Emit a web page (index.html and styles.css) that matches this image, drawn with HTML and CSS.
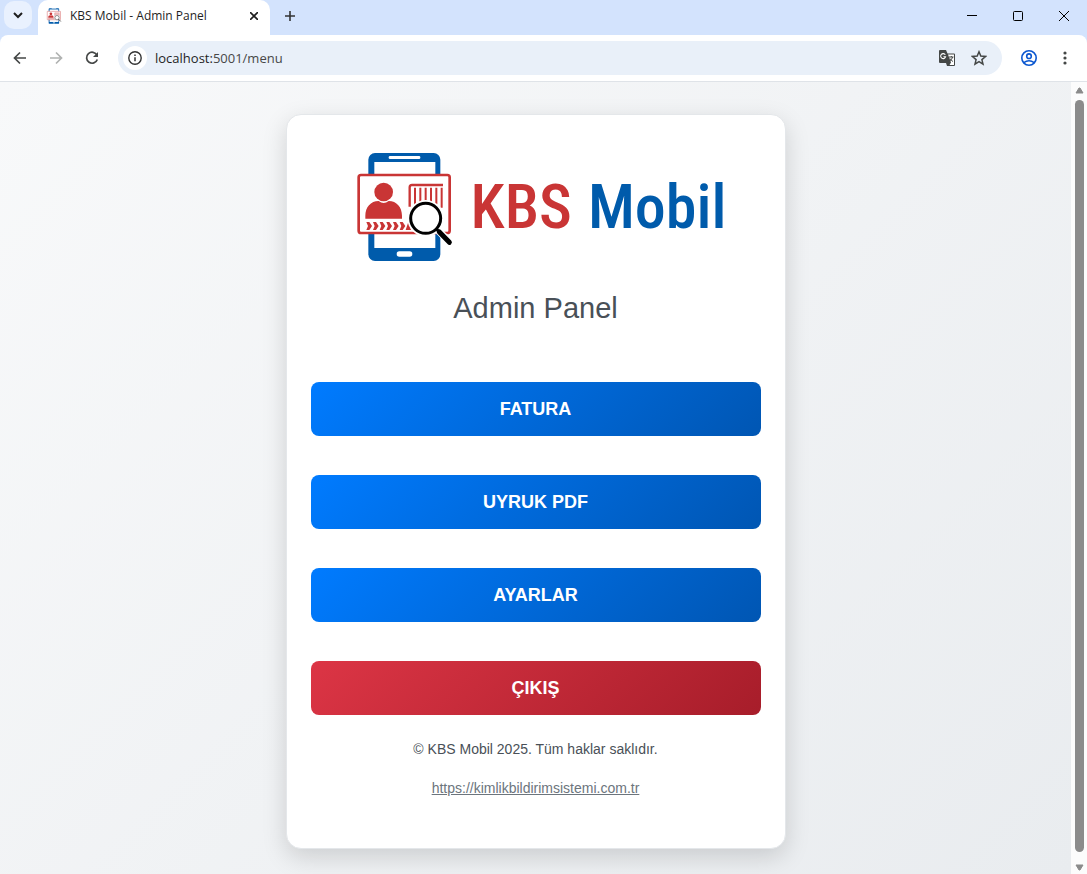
FILE: index.html
```
<!DOCTYPE html>
<html lang="tr">
<head>
    <meta charset="UTF-8">
    <meta name="viewport" content="width=device-width, initial-scale=1.0">
    <title>KBS Mobil - Admin Panel</title>
    <link rel="stylesheet" href="styles.css">
</head>
<body>
    <!-- Logo symbol, used in the tab and in the card -->
    <svg class="defs" width="0" height="0" aria-hidden="true">
        <symbol id="kbs-logo" viewBox="50 36 288 330">
            <rect x="84" y="39" width="216" height="324" rx="20" fill="#005bab"/>
            <rect x="102" y="66" width="183" height="258" fill="#fff"/>
            <rect x="145" y="48" width="95" height="9" rx="4" fill="#fff"/>
            <rect x="169" y="334" width="47" height="16" rx="8" fill="#fff"/>
            <rect x="55" y="105" width="273" height="174" rx="7" fill="#fff" stroke="#c93535" stroke-width="8"/>
            <circle cx="130" cy="156" r="28" fill="#c93535"/>
            <path d="M75 236v-9c0-25 16-44 40-44q15 12 30 0c24 0 40 19 40 44v9z" fill="#c93535"/>
            <path d="M78 246h9l8 12-8 12h-9l5-12zM98 246h9l8 12-8 12h-9l5-12zM118 246h9l8 12-8 12h-9l5-12zM138 246h9l8 12-8 12h-9l5-12zM158 246h9l8 12-8 12h-9l5-12zM178 246h9l8 12-8 12h-9l5-12zM196 270l8-24 8 24z" fill="#c93535"/>
            <path d="M208 200v-58q0-7 7-7h93" fill="none" stroke="#c93535" stroke-width="7"/>
            <path d="M224 143v60M240 143v50M256 143v50M272 143v50M288 143v50M304 143v60" fill="none" stroke="#c93535" stroke-width="6"/>
            <circle cx="256" cy="235" r="55" fill="#fff"/>
            <path d="M286 264l44 44" stroke="#fff" stroke-width="22"/>
            <circle cx="256" cy="235" r="45" fill="#fff" stroke="#000" stroke-width="9"/>
            <path d="M288 267l10 10" stroke="#000" stroke-width="9"/>
            <path d="M297 276l30 31" stroke="#000" stroke-width="15" stroke-linecap="round"/>
        </symbol>
    </svg>

    <header class="browser">
        <div class="tab-strip">
            <button class="tab-search" aria-label="Search tabs">
                <svg width="10" height="10" viewBox="0 0 10 10"><path d="M1 3l4 4 4-4" fill="none" stroke="#1f1f1f" stroke-width="2"/></svg>
            </button>
            <div class="tab">
                <svg class="favicon" width="16" height="16"><use href="#kbs-logo"/></svg>
                <span class="tab-title">KBS Mobil - Admin Panel</span>
                <button class="icon-btn" aria-label="Close tab">
                    <svg width="8" height="8" viewBox="0 0 8 8"><path d="M0 0l8 8M8 0l-8 8" stroke="#1f1f1f" stroke-width="1.600"/></svg>
                </button>
            </div>
            <button class="icon-btn new-tab" aria-label="New tab">
                <svg width="12" height="12" viewBox="0 0 12 12"><path d="M6 1v10M1 6h10" stroke="#333" stroke-width="1.600"/></svg>
            </button>
            <div class="window-buttons">
                <button aria-label="Minimize"><svg width="12" height="12" viewBox="0 0 12 12"><path d="M1 5.500h10" stroke="#000"/></svg></button>
                <button aria-label="Maximize"><svg width="12" height="12" viewBox="0 0 12 12"><rect x="1.500" y="1.500" width="9" height="9" rx="1" fill="none" stroke="#000"/></svg></button>
                <button aria-label="Close"><svg width="12" height="12" viewBox="0 0 12 12"><path d="M1 1l10 10M11 1L1 11" stroke="#000"/></svg></button>
            </div>
        </div>
        <div class="toolbar">
            <button class="icon-btn nav-btn" aria-label="Back">
                <svg width="16" height="16" viewBox="0 0 16 16"><path d="M14 8H3M8 2.500L2.500 8 8 13.500" fill="none" stroke="#444746" stroke-width="1.700"/></svg>
            </button>
            <button class="icon-btn nav-btn" aria-label="Forward" disabled>
                <svg width="16" height="16" viewBox="0 0 16 16"><path d="M2 8h11M8 2.500l5.500 5.500L8 13.500" fill="none" stroke="#b0b2b1" stroke-width="1.700"/></svg>
            </button>
            <button class="icon-btn nav-btn" aria-label="Reload">
                <svg width="16" height="16" viewBox="0 0 16 16"><path d="M13 5.200A5.500 5.500 0 1 0 13.300 9.500" fill="none" stroke="#444746" stroke-width="1.700"/><path d="M14 2v5H9z" fill="#444746"/></svg>
            </button>
            <div class="address-bar">
                <button class="site-info" aria-label="Site information">
                    <svg width="16" height="16" viewBox="0 0 16 16"><circle cx="8" cy="8" r="6.200" fill="none" stroke="#333" stroke-width="1.400"/><path d="M8 7.200v4M8 4.500v1.600" stroke="#333" stroke-width="1.500"/></svg>
                </button>
                <div class="url"><span class="host">localhost:</span>5001/menu</div>
                <button class="icon-btn translate" aria-label="Translate this page">
                    <svg width="18" height="18" viewBox="0 0 18 18">
                        <path d="M2 1h6l1.500 3.500H16a1 1 0 0 1 1 1V16a1 1 0 0 1-1 1H9l-1-3H2a1 1 0 0 1-1-1V2a1 1 0 0 1 1-1z" fill="#444746"/>
                        <path d="M10 5.500h6v10.500h-4.500l1.500-2.500z" fill="#fff"/>
                        <path d="M7.300 5.800A2.500 2.500 0 1 0 7.600 7.700H5.400" fill="none" stroke="#fff" stroke-width="1.100"/>
                        <path d="M11 8h4.500M13.300 7v1M14.600 8q-.6 2.700-3 4M12 9.500q1 2 3 3" fill="none" stroke="#444746"/>
                    </svg>
                </button>
                <button class="icon-btn star" aria-label="Bookmark this tab">
                    <svg width="16" height="16" viewBox="0 0 16 16"><path d="M8 1.800l1.800 4.300 4.700.4-3.600 3.100 1.100 4.600L8 11.700l-4 2.500 1.100-4.600-3.600-3.100 4.700-.4z" fill="none" stroke="#444746" stroke-width="1.500"/></svg>
                </button>
            </div>
            <button class="icon-btn profile" aria-label="Profile">
                <svg width="18" height="18" viewBox="0 0 18 18" fill="none" stroke="#0b57d0" stroke-width="1.600"><circle cx="9" cy="9" r="7.200"/><circle cx="9" cy="7.200" r="2.300"/><path d="M3.800 13.700q5.200-3.800 10.400 0"/></svg>
            </button>
            <button class="icon-btn menu" aria-label="Menu">
                <svg width="4" height="16" viewBox="0 0 4 16" fill="#444746"><circle cx="2" cy="3" r="1.600"/><circle cx="2" cy="8" r="1.600"/><circle cx="2" cy="13" r="1.600"/></svg>
            </button>
        </div>
    </header>

    <div class="viewport">
        <main class="page">
            <div class="card">
                <div class="logo">
                    <svg class="logo-icon" width="96" height="110"><use href="#kbs-logo"/></svg>
                    <span class="logo-kbs">KBS</span>
                    <span class="logo-mobil">Mobil</span>
                </div>
                <h1>Admin Panel</h1>
                <nav class="menu-list">
                    <button class="btn">FATURA</button>
                    <button class="btn">UYRUK PDF</button>
                    <button class="btn">AYARLAR</button>
                    <button class="btn btn-danger">ÇIKIŞ</button>
                </nav>
                <footer>
                    <p>© KBS Mobil 2025. Tüm haklar saklıdır.</p>
                    <p><a href="https://kimlikbildirimsistemi.com.tr">https://kimlikbildirimsistemi.com.tr</a></p>
                </footer>
            </div>
        </main>
        <div class="scrollbar" aria-hidden="true">
            <svg width="9" height="7" viewBox="0 0 9 7"><path d="M4 1h1l3 5H1z" fill="#8b8b8b" stroke="#8b8b8b" stroke-linejoin="round"/></svg>
            <div class="thumb"></div>
            <svg width="9" height="7" viewBox="0 0 9 7"><path d="M4 6h1l3-5H1z" fill="#8b8b8b" stroke="#8b8b8b" stroke-linejoin="round"/></svg>
        </div>
    </div>
</body>
</html>
```
FILE: styles.css
```
* {
    box-sizing: border-box;
}
body {
    margin: 0;
    min-height: 100vh;
    display: flex;
    flex-direction: column;
    font-family: "Liberation Sans", Arial, sans-serif;
}
button {
    border: none;
    padding: 0;
    background: none;
    font-family: inherit;
    cursor: pointer;
}
svg {
    display: block;
}
.defs {
    position: absolute;
}

/* Browser window */
.browser {
    background-color: #d3e3fd;
    font-family: "Open Sans", "Segoe UI", sans-serif;
    color: #1f1f1f;
}
.tab-strip {
    display: flex;
    height: 35px;
    padding-left: 4px;
}
.tab-search {
    display: flex;
    align-items: center;
    justify-content: center;
    width: 28px;
    height: 28px;
    margin-top: 1px;
    border-radius: 10px;
    background-color: #e9f1fe;
}
.tab {
    display: flex;
    align-items: center;
    width: 232px;
    margin-left: 6px;
    padding: 0 8px 4px;
    border-radius: 10px 10px 0 0;
    background-color: #fff;
}
.tab-title {
    flex: 1;
    margin-left: 8px;
    font-size: 12px;
    line-height: 16px;
    white-space: nowrap;
}
.icon-btn {
    display: flex;
    align-items: center;
    justify-content: center;
    width: 16px;
    flex-shrink: 0;
}
.new-tab {
    width: 40px;
    height: 31px;
}
.window-buttons {
    display: flex;
    height: 31px;
    margin-left: auto;
}
.window-buttons button {
    display: flex;
    align-items: center;
    justify-content: center;
    width: 46px;
}
.toolbar {
    display: flex;
    align-items: center;
    height: 47px;
    padding: 0 14px 0 2px;
    border-bottom: 1px solid #dfe3e8;
    border-radius: 8px 8px 0 0;
    background-color: #fff;
}
.nav-btn {
    width: 36px;
    height: 34px;
}
.address-bar {
    display: flex;
    align-items: center;
    flex: 1;
    height: 34px;
    margin-left: 8px;
    padding: 0 15px 0 5px;
    border-radius: 17px;
    background-color: #e9f0f9;
}
.site-info {
    display: flex;
    align-items: center;
    justify-content: center;
    width: 24px;
    height: 24px;
    border-radius: 50%;
    background-color: #fff;
}
.url {
    flex: 1;
    margin-left: 8px;
    font-size: 13px;
    line-height: 20px;
    color: #474747;
}
.host {
    color: #1f1f1f;
}
.translate {
    width: 18px;
}
.star {
    margin-left: 15px;
}
.profile {
    width: 18px;
    margin-left: 18px;
}
.menu {
    margin-left: 19px;
}

/* Admin page */
.viewport {
    display: flex;
    flex: 1;
}
.page {
    flex: 1;
    padding: 32px 20px 24px;
    background: linear-gradient(135deg, #f8f9fa, #e9ecef);
}
.card {
    max-width: 500px;
    margin: 0 auto;
    padding: 37px 24px 50px;
    border: 1px solid #e4e7ea;
    border-radius: 15px;
    background-color: #fff;
    box-shadow: 0 8px 24px rgba(0, 0, 0, 0.15);
    text-align: center;
}
.logo {
    display: flex;
    align-items: center;
    justify-content: center;
    height: 110px;
    padding-left: 12px;
    font-family: "Roboto Condensed", Roboto, sans-serif;
    font-size: 62px;
    font-weight: 500;
    line-height: 80px;
}
.logo-icon {
    flex-shrink: 0;
}
.logo-kbs {
    margin-left: 18px;
    color: #c93535;
}
.logo-mobil {
    margin-left: 16px;
    color: #005bab;
}
h1 {
    margin: 28px 0 56px;
    font-size: 29px;
    font-weight: normal;
    line-height: 36px;
    color: #495057;
}
.menu-list {
    display: grid;
    gap: 39px;
}
.btn {
    height: 54px;
    border-radius: 8px;
    background: linear-gradient(135deg, #007bff, #0056b3);
    color: #fff;
    font-size: 18px;
    font-weight: bold;
}
.btn-danger {
    background: linear-gradient(135deg, #dc3545, #a71d2a);
}
footer {
    margin-top: 24px;
    font-size: 14px;
    line-height: 20px;
    color: #495057;
}
footer p {
    margin: 0 0 19px;
}
footer p:last-child {
    margin-bottom: 0;
}
footer a {
    color: #6c757d;
}

/* Scrollbar */
.scrollbar {
    display: flex;
    flex-direction: column;
    align-items: center;
    gap: 6px;
    width: 16px;
    padding: 5px 0 3px;
    background-color: #fcfcfc;
}
.thumb {
    flex: 1;
    width: 9px;
    margin-bottom: 6px;
    border-radius: 5px;
    background-color: #8b8b8b;
}
```
